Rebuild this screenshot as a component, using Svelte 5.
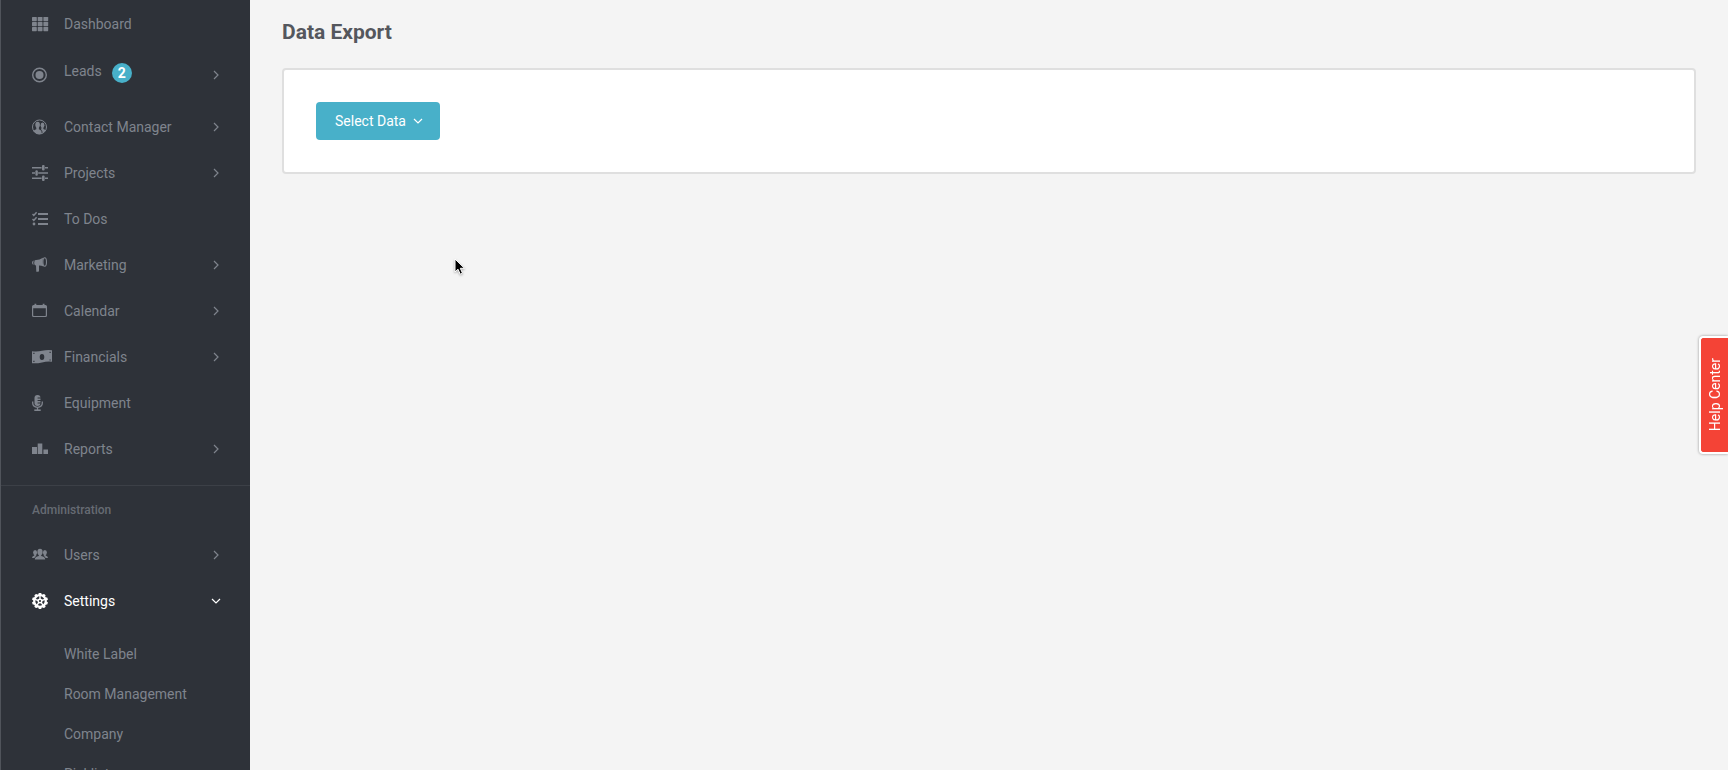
<script>
  const mainItems = [
    { label: "Dashboard", icon: "grid" },
    { label: "Leads", icon: "target", badge: 2, arrow: true },
    { label: "Contact Manager", icon: "contacts", arrow: true },
    { label: "Projects", icon: "sliders", arrow: true },
    { label: "To Dos", icon: "tasks" },
    { label: "Marketing", icon: "megaphone", arrow: true },
    { label: "Calendar", icon: "calendar", arrow: true },
    { label: "Financials", icon: "money", arrow: true },
    { label: "Equipment", icon: "mic" },
    { label: "Reports", icon: "bars", arrow: true },
  ];

  const adminItems = [
    { label: "Users", icon: "users", arrow: true },
    { label: "Settings", icon: "gear", arrow: true, open: true },
  ];

  const settingsItems = ["White Label", "Room Management", "Company", "Picklists"];

  const teeth = [0, 36, 72, 108, 144, 180, 216, 252, 288, 324];
  const spokes = [0, 72, 144, 216, 288];
</script>

{#snippet icon(name)}
  <svg class="icon" viewBox="0 0 20 16" aria-hidden="true">
    {#if name === "grid"}
      {#each [1, 6, 11] as y}
        {#each [0, 5.7, 11.4] as x}
          <rect {x} {y} width="4.8" height="4.2" rx="0.6" />
        {/each}
      {/each}
    {:else if name === "target"}
      <circle cx="7.5" cy="8" r="6.8" fill="none" stroke="currentColor" stroke-width="1.4" />
      <circle cx="7.5" cy="8" r="4" />
    {:else if name === "contacts"}
      <circle cx="7.5" cy="8" r="7" fill="none" stroke="currentColor" stroke-width="1" />
      <ellipse cx="5.6" cy="5.8" rx="2.3" ry="3.1" />
      <path d="M4.3 8h2.6v2.2l2.1 1.2q.7.5.7 3.4-5 1.5-8.4-2.6 1-1.4 3-2z" />
      <ellipse cx="10.5" cy="6.2" rx="1.9" ry="2.7" />
      <path d="M9.6 8h1.8v2l2.7 1.2-3.4 3.2q-.1-2.7-1.6-3.6z" />
    {:else if name === "sliders"}
      <path d="M0 2h9.6v1.4H0zM13 2h3v1.4h-3zM0 7.3h3v1.4H0zM6.2 7.3H16v1.4H6.2zM0 12.6h9.6V14H0zM13 12.6h3V14h-3z" />
      <rect x="10" y="0" width="2.6" height="5.4" rx="1" />
      <rect x="3.4" y="5.3" width="2.4" height="5.4" rx="1" />
      <rect x="10" y="10.6" width="2.6" height="5.4" rx="1" />
    {:else if name === "tasks"}
      <path d="M6 2h10v2H6zM6 7h10v2H6zM6 12h10v2H6z" />
      <path d="M.5 3l1.3 1.4L4.6 1.2M.5 8l1.3 1.4L4.6 6.2" fill="none" stroke="currentColor" stroke-width="1.5" />
      <circle cx="2" cy="13" r="1.4" />
    {:else if name === "megaphone"}
      <path d="M2.7 3.3Q8 3.2 11 .8q-1.2 4.4.5 8.8-2-.9-4.5-1v5.2q0 1-.9 1H4.3L4 8.4l-1.300-.5q-1-2 0-4.600z" />
      <path d="M1.7 3.5q-1.7.3-1.7 2.2t1.7 2.1q-.8-2.2 0-4.3z" />
      <ellipse cx="12.7" cy="5" rx="1.8" ry="4.2" fill="none" stroke="currentColor" stroke-width="1.1" />
    {:else if name === "calendar"}
      <path d="M1.5 2h1V.8h1.8V2h6.4V.8h1.8V2h1Q15 2 15 3.5v9q0 1.5-1.5 1.5h-12Q0 14 0 12.5v-9Q0 2 1.5 2zM1.2 5.3v7q0 .6.6.6h11.4q.6 0 .6-.6v-7z" fill-rule="evenodd" />
    {:else if name === "money"}
      <path d="M0 2.2Q5 3 10 1.8T20 1.2v11.5q-5-.5-10 .7T0 14.2zM10 5a2.3 3 0 100 6 2.3 3 0 000-6zM1.3 3.7v1.2h1.2V3.8zM1.3 11.7V13h1.2v-1.3zM17.5 2.8V4h1.2V2.8zM17.5 10.4v1.2h1.2v-1.2z" fill-rule="evenodd" />
    {:else if name === "mic"}
      <rect x="2.5" y="0" width="6" height="11" rx="3" />
      <path d="M.7 6.5V8q0 4 4.800 4.300Q10.300 12 10.300 8V6.500M5.500 12v3" fill="none" stroke="currentColor" stroke-width="1.3" />
      <path d="M2.3 14.4h6.400V16H2.300z" />
      <path class="cut" d="M5.6 3H9M5.6 5.5H9M5.6 8H9" />
    {:else if name === "bars"}
      <path d="M0 6h5v7H0zM5.7 2.500h4.600V13H5.700zM11.400 8.500H16V13h-4.600z" />
    {:else if name === "users"}
      <ellipse cx="8" cy="5" rx="2.6" ry="3.2" />
      <path d="M6.8 7h2.400v2q4 .8 4 3.500H2.800Q2.800 9.800 6.800 9z" />
      <ellipse cx="3.1" cy="5.6" rx="2" ry="2.6" />
      <path d="M2.3 7h1.600v1.500l.8.300Q2.700 9.600 2.400 11H0q0-2 2.300-2.500z" />
      <ellipse cx="12.9" cy="5.6" rx="2" ry="2.6" />
      <path d="M13.7 7h-1.600v1.500l-.8.300q2 .8 2.300 2.200H16q0-2-2.300-2.500z" />
    {:else if name === "gear"}
      <circle cx="8" cy="8" r="5.8" fill="none" stroke="currentColor" stroke-width="2.2" />
      {#each teeth as angle}
        <rect x="6.6" y="0" width="2.8" height="2.5" rx="0.6" transform="rotate({angle} 8 8)" />
      {/each}
      {#each spokes as angle}
        <path d="M7.3 2.500h1.400v4H7.300z" transform="rotate({angle} 8 8)" />
      {/each}
      <circle cx="8" cy="8" r="1.8" fill="none" stroke="currentColor" stroke-width="1.4" />
    {/if}
  </svg>
{/snippet}

{#snippet chevron(down)}
  <svg class="chevron" class:down viewBox="0 0 10 10" aria-hidden="true">
    <path d="M3 1l4 4-4 4" />
  </svg>
{/snippet}

{#snippet menu(items)}
  <ul>
    {#each items as item}
      <li>
        <a href="#top" class="nav-link" class:open={item.open} class:tall={item.badge}>
          {@render icon(item.icon)}
          <span class="label">
            {item.label}
            {#if item.badge}<span class="badge">{item.badge}</span>{/if}
          </span>
          {#if item.arrow}{@render chevron(item.open)}{/if}
        </a>
      </li>
    {/each}
  </ul>
{/snippet}

<div class="layout">
  <nav class="sidebar">
    {@render menu(mainItems)}
    <div class="admin">
      <h2>Administration</h2>
      {@render menu(adminItems)}
      <ul class="submenu">
        {#each settingsItems as item}
          <li><a href="#top">{item}</a></li>
        {/each}
      </ul>
    </div>
  </nav>

  <main>
    <h1>Data Export</h1>
    <section class="card">
      <button class="select-data" type="button">
        Select Data
        {@render chevron(true)}
      </button>
    </section>
  </main>
</div>

<button class="help" type="button">Help Center</button>

<svg class="cursor" viewBox="0 0 12 18" aria-hidden="true">
  <path d="M1 1v13l3-2.8 2.2 5 2.3-1-2.2-4.900H10.500z" />
</svg>

<style>
  :global(body) {
    background: #f4f4f4;
  }

  .layout {
    display: flex;
    height: 100vh;
    overflow: hidden;
    font-family: Roboto, sans-serif;
    font-size: 14px;
    line-height: 20px;
  }

  /* Sidebar */
  .sidebar {
    flex: 0 0 250px;
    box-sizing: border-box;
    padding-top: 1px;
    border-left: 1px solid #50545b;
    background: #2e3239;
    color: #7f848d;
    overflow: hidden;
  }

  ul {
    margin: 0;
    padding: 0;
    list-style: none;
  }

  a {
    color: inherit;
    text-decoration: none;
  }

  .nav-link {
    display: flex;
    align-items: center;
    height: 46px;
    padding: 0 29px 0 31px;
  }

  .nav-link.tall {
    height: 55px;
    margin-bottom: 2px;
  }

  .nav-link.open {
    color: #fff;
  }

  .icon {
    width: 20px;
    height: 16px;
    margin-right: 12px;
    fill: currentColor;
  }

  .cut {
    stroke: #2e3239;
    stroke-width: 1;
  }

  .label {
    flex: 1;
    display: flex;
    align-items: center;
    gap: 10px;
  }

  .tall .label {
    align-items: flex-start;
    padding-bottom: 6px;
  }

  .badge {
    width: 20px;
    height: 20px;
    margin-top: 2px;
    border-radius: 50%;
    background: #48b0c9;
    color: #fff;
    font-weight: 700;
    text-align: center;
  }

  .chevron {
    width: 10px;
    height: 10px;
    fill: none;
    stroke: currentColor;
    stroke-width: 1.2;
  }

  .chevron.down {
    transform: rotate(90deg);
  }

  .admin {
    margin-top: 13px;
    border-top: 1px solid #3c4047;
  }

  h2 {
    margin: 0;
    padding: 14px 31px 12px;
    color: #666b73;
    font-size: 12px;
    font-weight: 500;
    line-height: 20px;
  }

  .submenu {
    padding-top: 10px;
  }

  .submenu a {
    display: block;
    padding: 10px 28px 10px 63px;
  }

  /* Content */
  main {
    flex: 1;
    padding: 20px 32px;
  }

  h1 {
    margin: 0 0 24px;
    color: #54575d;
    font-size: 21px;
    font-weight: 700;
    line-height: 24px;
  }

  .card {
    padding: 32px;
    border: 2px solid #dfdfdf;
    border-radius: 4px;
    background: #fff;
  }

  .select-data {
    display: flex;
    align-items: center;
    gap: 7px;
    height: 38px;
    padding: 0 17px 0 19px;
    border: 0;
    border-radius: 4px;
    background: #48b0c9;
    color: #fff;
    font: inherit;
  }

  .help {
    position: fixed;
    top: 336px;
    right: 0;
    width: 29px;
    height: 118px;
    padding: 0;
    border: 2px solid #fff;
    border-right: 0;
    border-radius: 4px 0 0 4px;
    background: #f44336;
    box-shadow: 0 0 3px rgba(0, 0, 0, 0.4);
    color: #fff;
    font-family: Roboto, sans-serif;
    font-size: 14px;
    writing-mode: sideways-lr;
  }

  .cursor {
    position: fixed;
    top: 258px;
    left: 454px;
    width: 12px;
    height: 18px;
    stroke: #fff;
    stroke-width: 1;
    filter: drop-shadow(0 1px 1px rgba(0, 0, 0, 0.3));
  }
</style>
